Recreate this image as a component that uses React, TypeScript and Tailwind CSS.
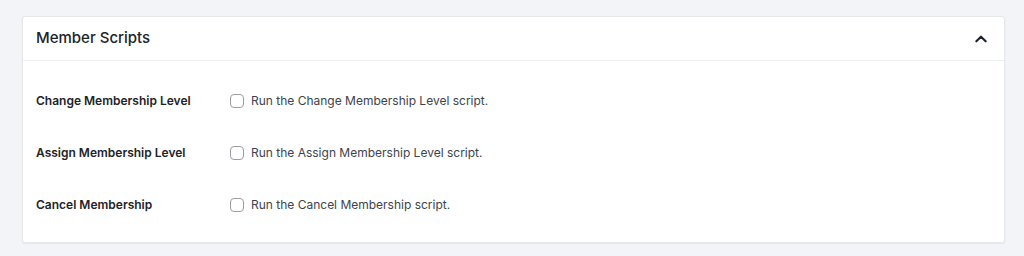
import React from 'react';

const rows = [
  { label: 'Change Membership Level', text: 'Run the Change Membership Level script.' },
  { label: 'Assign Membership Level', text: 'Run the Assign Membership Level script.' },
  { label: 'Cancel Membership', text: 'Run the Cancel Membership script.' },
];

export default function App() {
  return (
    <div className="min-h-[256px] bg-[#f3f4f7] pt-4 pl-[22px] pr-[19px] font-['Inter',sans-serif]">
      <div className="bg-white border border-[#e6e7ea] rounded-[3px] shadow-[0_1px_2px_rgba(0,0,0,0.06)]">
        {/* Header */}
        <div className="h-[44px] flex items-center justify-between pl-[13px] pr-[15px] border-b border-[#eeeff1]">
          <h2 className="text-[15px] font-medium text-[#1d2327]">Member Scripts</h2>
          <svg width="16" height="16" viewBox="0 0 24 24" fill="none" stroke="#1d2327" strokeWidth="3.2" strokeLinecap="round" strokeLinejoin="round">
            <path d="M5 15.5l7-7 7 7" />
          </svg>
        </div>

        {/* Rows */}
        <div className="pt-[14px] pb-[11px] pl-[13px]">
          {rows.map(r => (
            <div key={r.label} className="h-[52px] flex items-center">
              <div className="w-[194px] text-[12px] font-semibold text-[#1d2327]">{r.label}</div>
              <label className="flex items-center gap-[7px] text-[12px] text-[#3c434a]">
                <span className="w-[14px] h-[14px] rounded-[4px] border border-[#9a9da2] bg-white" />
                {r.text}
              </label>
            </div>
          ))}
        </div>
      </div>
    </div>
  );
}
